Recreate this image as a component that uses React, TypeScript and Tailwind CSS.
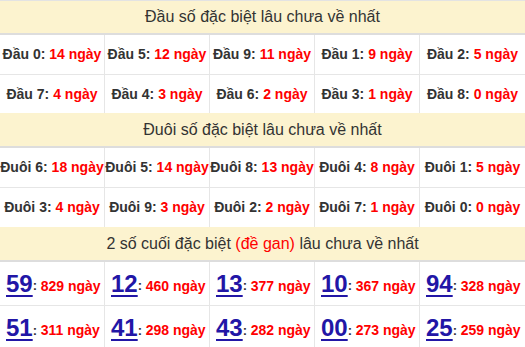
const dau = [
  [
    ["Đầu 0", "14"],
    ["Đầu 5", "12"],
    ["Đầu 9", "11"],
    ["Đầu 1", "9"],
    ["Đầu 2", "5"],
  ],
  [
    ["Đầu 7", "4"],
    ["Đầu 4", "3"],
    ["Đầu 6", "2"],
    ["Đầu 3", "1"],
    ["Đầu 8", "0"],
  ],
];

const duoi = [
  [
    ["Đuôi 6", "18"],
    ["Đuôi 5", "14"],
    ["Đuôi 8", "13"],
    ["Đuôi 4", "8"],
    ["Đuôi 1", "5"],
  ],
  [
    ["Đuôi 3", "4"],
    ["Đuôi 9", "3"],
    ["Đuôi 2", "2"],
    ["Đuôi 7", "1"],
    ["Đuôi 0", "0"],
  ],
];

const gan = [
  [
    ["59", "829"],
    ["12", "460"],
    ["13", "377"],
    ["10", "367"],
    ["94", "328"],
  ],
  [
    ["51", "311"],
    ["41", "298"],
    ["43", "282"],
    ["00", "273"],
    ["25", "259"],
  ],
];

function Header({ children, top }: { children: React.ReactNode; top?: boolean }) {
  return (
    <div
      className={`flex items-center justify-center h-[35px] bg-[#fcf3cf] border-b-2 border-[#dddddd] text-[16px] text-[#333] ${
        top ? "border-t border-t-[#e3e3e3]" : ""
      }`}
    >
      {children}
    </div>
  );
}

function CountRows({ rows, heights }: { rows: string[][][]; heights: string[] }) {
  return (
    <>
      {rows.map((row, i) => (
        <div key={i} className={`grid grid-cols-5 ${heights[i]}`}>
          {row.map(([label, days], j) => (
            <div
              key={j}
              className={`flex items-center justify-center whitespace-nowrap text-[14px] font-bold text-[#333] ${
                j < 4 ? "border-r border-[#e6e6e6]" : ""
              } ${i === 0 ? "border-b border-[#e6e6e6]" : ""}`}
            >
              {label}:&nbsp;<span className="text-[#ff0000]">{days} ngày</span>
            </div>
          ))}
        </div>
      ))}
    </>
  );
}

export default function App() {
  return (
    <div className="w-[525px] h-[347px] overflow-hidden bg-white font-['Liberation_Sans',Arial,sans-serif]">
      <Header top>Đầu số đặc biệt lâu chưa về nhất</Header>
      <CountRows rows={dau} heights={["h-[40px]", "h-[38px]"]} />

      <Header>Đuôi số đặc biệt lâu chưa về nhất</Header>
      <CountRows rows={duoi} heights={["h-[40px]", "h-[39px]"]} />

      <Header>
        2 số cuối đặc biệt&nbsp;<span className="text-[#ff0000]">(đề gan)</span>&nbsp;lâu chưa về nhất
      </Header>
      {gan.map((row, i) => (
        <div key={i} className="grid grid-cols-5 h-[44px]">
          {row.map(([num, days], j) => (
            <div
              key={j}
              className={`flex items-center pl-[6px] whitespace-nowrap ${
                j < 4 ? "border-r border-[#e6e6e6]" : ""
              } ${i === 0 ? "border-b border-[#e6e6e6]" : ""}`}
            >
              <span className="text-[24px] leading-none font-bold text-[#2216a6] underline underline-offset-[3px] decoration-[2px]">
                {num}
              </span>
              <span className="text-[13px] font-bold text-[#333] mt-[5px]">:&nbsp;</span>
              <span className="text-[14px] font-bold text-[#ff0000] mt-[5px]">{days} ngày</span>
            </div>
          ))}
        </div>
      ))}
    </div>
  );
}
